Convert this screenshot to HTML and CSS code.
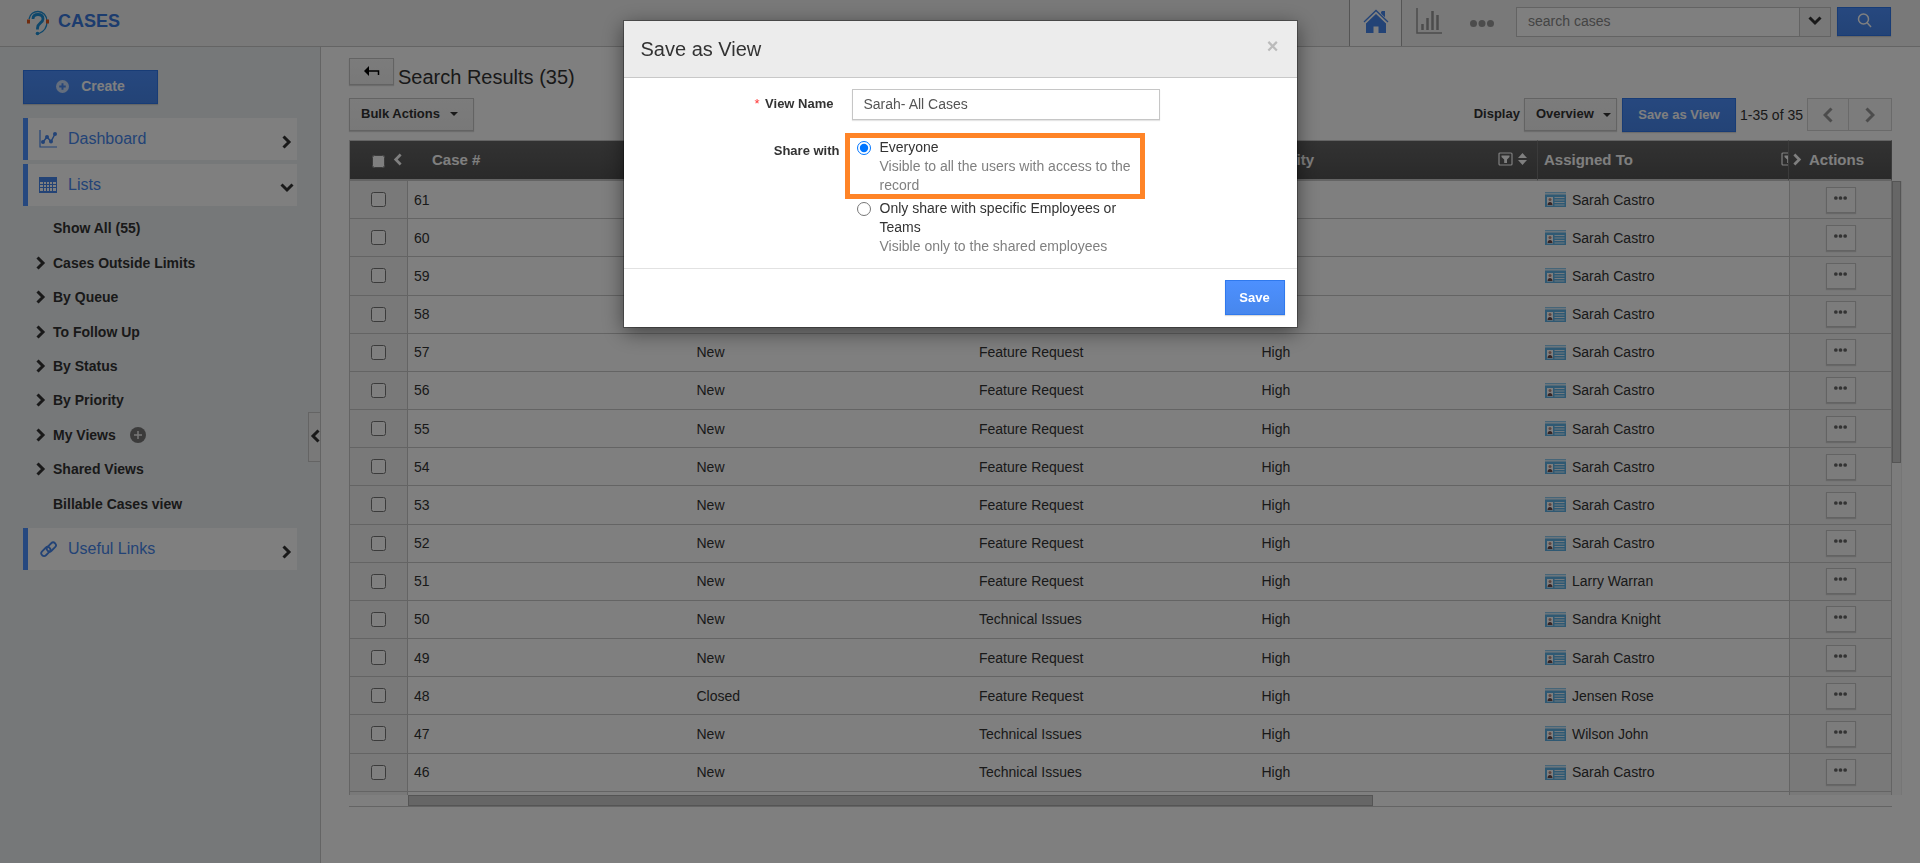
FILE: index.html
```html
<!DOCTYPE html>
<html lang="en">
<head>
  <meta charset="UTF-8" />
  <meta name="viewport" content="width=device-width, initial-scale=1.0"/>
  <title>Cases</title>
  <link rel="stylesheet" href="styles.css">
</head>
<body>

  <!-- shared icons -->
  <svg class="sprite" aria-hidden="true">
    <symbol id="chevron" viewBox="0 0 10 14"><path d="M1.500 1.500L7 7l-5.500 5.500" fill="none" stroke="currentColor" stroke-width="3"/></symbol>
    <symbol id="plus" viewBox="0 0 16 16"><circle cx="8" cy="8" r="8" fill="currentColor"/></symbol>
    <symbol id="filter" viewBox="0 0 15 14">
      <rect x="1" y="1" width="13" height="12" rx="1" fill="none" stroke="currentColor" stroke-width="1.2"/>
      <path d="M3.5 3.5h8v1.5L9 7.500v3.500H6.200V7.500L3.500 5z" fill="currentColor"/>
    </symbol>
    <symbol id="sort" viewBox="0 0 9 12"><path d="M4.500 0L9 5H0zM0 7h9l-4.500 5z" fill="currentColor"/></symbol>
    <symbol id="card" viewBox="0 0 21 15">
      <rect width="21" height="1" fill="#8ccbf0"/>
      <rect y="1" width="21" height="1.500" fill="#d4ebf9"/>
      <rect y="2.500" width="21" height="12.500" fill="#5fb2e6"/>
      <rect x="2" y="5" width="6" height="8.500" fill="#fff"/>
      <circle cx="5" cy="7.500" r="1.500" fill="#b98b80"/>
      <path d="M2.500 13c0-4 5-4 5 0z" fill="#6b4a4a"/>
      <path d="M9.500 5.500h10M9.500 8h10M9.500 10.500h10M9.500 13h10" stroke="#e4f3fc"/>
    </symbol>
    <symbol id="dots" viewBox="0 0 14 4"><path d="M2 0a2 2 0 110 4 2 2 0 010-4zM7 0a2 2 0 110 4 2 2 0 010-4zM12 0a2 2 0 110 4 2 2 0 010-4z" fill="currentColor"/></symbol>
  </svg>

  <header class="topbar">
    <a class="brand" href="#">
      <svg width="22" height="26" viewBox="0 0 22 26" fill="none">
        <path d="M2 9C3 4 7 1.500 11 1.500c5 0 9 4 9 10 0 6-3 10-8 12" stroke="#1d8fd6" stroke-width="1.300"/>
        <path d="M6 9c0-3 2-4.500 5-4.500 3.500 0 5 2 5 4.500 0 4-5.500 4-5.500 9v1.500" stroke="#1d8fd6" stroke-width="2.800"/>
        <circle cx="10.500" cy="23.500" r="1.800" fill="#1d8fd6"/>
        <path d="M1.500 9.500v4M20.500 9.500v4" stroke="#e0571c" stroke-width="3"/>
      </svg>
      CASES
    </a>
    <nav class="tabs">
      <a class="tab active" href="#" aria-label="Home">
        <svg width="26" height="25" viewBox="0 0 26 25">
          <path d="M18 3h4v8l-4-4z" fill="#4787ed"/>
          <path d="M1 13.500L13 2l12 11.500" fill="none" stroke="#fff" stroke-width="4"/>
          <path d="M3 14L13 4.500 23 14v10h-7.500v-6.500h-5V24H3z" fill="#4787ed"/>
          <path d="M1 13L13 1.500 25 13" fill="none" stroke="#4787ed" stroke-width="1.400"/>
          <path d="M2 14.500L13 4l11 10.500" fill="none" stroke="#fff" stroke-width="1.200"/>
          <path d="M18.500 2h3.500v6l-3.500-3z" fill="#4787ed"/>
        </svg>
      </a>
      <a class="tab" href="#" aria-label="Reports">
        <svg width="26" height="26" viewBox="0 0 26 26" stroke="#999" fill="none">
          <path d="M1 0v25h25" stroke-width="1.500"/>
          <path d="M6.500 16v6M11.500 10v12M16.500 3v19M21.500 7v15" stroke-width="2.500"/>
        </svg>
      </a>
      <a class="tab more" href="#" aria-label="More"><svg width="24" height="7" viewBox="0 0 24 7"><path d="M3.500 0a3.500 3.500 0 110 7 3.500 3.500 0 010-7zM12 0a3.500 3.500 0 110 7 3.500 3.500 0 010-7zM20.500 0a3.500 3.500 0 110 7 3.500 3.500 0 010-7z" fill="currentColor"/></svg></a>
    </nav>
    <form class="search">
      <input type="text" aria-label="Search cases" placeholder="search cases">
      <button type="button" class="search-menu" aria-label="Search options"><svg class="down" width="10" height="14"><use href="#chevron"/></svg></button>
      <button type="submit" class="btn-blue search-go" aria-label="Search">
        <svg width="15" height="15" viewBox="0 0 15 15" fill="none" stroke="currentColor" stroke-width="1.500"><circle cx="6.500" cy="6" r="5"/><path d="M10 9.500l4 4.500"/></svg>
      </button>
    </form>
  </header>

  <div class="layout">
    <aside class="sidebar">
      <button type="button" class="btn-blue create">
        <svg width="13" height="13" viewBox="0 0 16 16"><use href="#plus"/><path d="M8 4v8M4 8h8" stroke="#4a8af2" stroke-width="2.400"/></svg>
        Create
      </button>
      <a class="nav-item" href="#">
        <svg width="18" height="18" viewBox="0 0 18 18" fill="none" stroke="#4787ed">
          <path d="M1 0v17h17" stroke-width="1.200"/>
          <path d="M4 12l4-5 4 4.500 4-7.500" stroke-width="1.500"/>
          <g fill="#4787ed" stroke="none"><circle cx="4" cy="12" r="2"/><circle cx="8" cy="7" r="2"/><circle cx="12" cy="11.500" r="2"/><circle cx="16" cy="4" r="2"/></g>
        </svg>
        <span>Dashboard</span>
        <svg class="arrow" width="10" height="14"><use href="#chevron"/></svg>
      </a>
      <a class="nav-item" href="#">
        <svg width="18" height="16" viewBox="0 0 18 16">
          <path d="M0 0h18v16H0z" fill="#4787ed"/>
          <path d="M1 5h3v2H1zM5 5h2v2H5zM8 5h2v2H8zM11 5h2v2h-2zM14 5h3v2h-3zM1 8h3v2H1zM5 8h2v2H5zM8 8h2v2H8zM11 8h2v2h-2zM14 8h3v2h-3zM1 11h3v3H1zM5 11h2v3H5zM8 11h2v3H8zM11 11h2v3h-2zM14 11h3v3h-3z" fill="#fff"/>
        </svg>
        <span>Lists</span>
        <svg class="arrow down" width="10" height="14"><use href="#chevron"/></svg>
      </a>
      <ul class="views">
        <li><a class="plain" href="#">Show All (55)</a></li>
        <li><a href="#"><svg width="10" height="14"><use href="#chevron"/></svg>Cases Outside Limits</a></li>
        <li><a href="#"><svg width="10" height="14"><use href="#chevron"/></svg>By Queue</a></li>
        <li><a href="#"><svg width="10" height="14"><use href="#chevron"/></svg>To Follow Up</a></li>
        <li><a href="#"><svg width="10" height="14"><use href="#chevron"/></svg>By Status</a></li>
        <li><a href="#"><svg width="10" height="14"><use href="#chevron"/></svg>By Priority</a></li>
        <li>
          <a href="#"><svg width="10" height="14"><use href="#chevron"/></svg>My Views</a>
          <button type="button" class="add-view" aria-label="Add view"><svg width="16" height="16" viewBox="0 0 16 16"><use href="#plus"/><path d="M8 4v8M4 8h8" stroke="#eee" stroke-width="1.500"/></svg></button>
        </li>
        <li><a href="#"><svg width="10" height="14"><use href="#chevron"/></svg>Shared Views</a></li>
        <li><a class="plain" href="#">Billable Cases view</a></li>
      </ul>
      <a class="nav-item" href="#">
        <svg width="18" height="18" viewBox="0 0 18 18" fill="none" stroke="#4787ed" stroke-width="1.800">
          <rect x="7" y="4.500" width="10.500" height="5.500" rx="2.700" transform="rotate(-45 12 7)"/>
          <rect x="1.500" y="9" width="10.500" height="5.500" rx="2.700" transform="rotate(-45 6.500 11.500)"/>
        </svg>
        <span>Useful Links</span>
        <svg class="arrow" width="10" height="14"><use href="#chevron"/></svg>
      </a>
      <button type="button" class="collapse" aria-label="Collapse sidebar"><svg class="left" width="10" height="14"><use href="#chevron"/></svg></button>
    </aside>

    <main class="content">
      <div class="title-row">
        <button type="button" class="btn back" aria-label="Back"><svg width="16" height="10" viewBox="0 0 16 10"><path d="M5 0v10L0 5z"/><path d="M4 5h10.500v4" fill="none" stroke="#000" stroke-width="1.500"/></svg></button>
        <h1>Search Results (35)</h1>
      </div>

      <div class="toolbar">
        <button type="button" class="btn bulk">Bulk Actions <i class="caret"></i></button>
        <div class="toolbar-right">
          <label for="display">Display</label>
          <span class="select-wrap">
            <select id="display" class="btn"><option>Overview</option></select>
            <i class="caret"></i>
          </span>
          <button type="button" class="btn-blue save-view">Save as View</button>
          <span class="range">1-35 of 35</span>
          <div class="pager">
            <button type="button" aria-label="Previous"><svg class="left" width="10" height="16" viewBox="0 0 10 16"><path d="M1.500 1.500L8 8l-6.500 6.500" fill="none" stroke="currentColor" stroke-width="3"/></svg></button>
            <button type="button" aria-label="Next"><svg width="10" height="16" viewBox="0 0 10 16"><path d="M1.500 1.500L8 8l-6.500 6.500" fill="none" stroke="currentColor" stroke-width="3"/></svg></button>
          </div>
        </div>
      </div>

      <div class="grid">
        <div class="grid-view">
          <table>
            <thead>
              <tr>
                <th class="col-check"><div class="head"><input type="checkbox" aria-label="Select all"><svg class="left" width="9" height="13"><use href="#chevron"/></svg></div></th>
                <th class="col-case">Case #</th>
                <th>Status</th>
                <th>Category</th>
                <th><div class="head"><span>Priority</span><svg width="15" height="14"><use href="#filter"/></svg><svg width="9" height="12"><use href="#sort"/></svg></div></th>
                <th class="col-assigned"><div class="head"><span>Assigned To</span><svg width="15" height="14"><use href="#filter"/></svg></div></th>
                <th class="col-actions"><div class="head"><svg width="9" height="13"><use href="#chevron"/></svg>Actions</div></th>
              </tr>
            </thead>
            <tbody id="caseRows"></tbody>
          </table>
        </div>
        <div class="scroll-y"><div class="thumb"></div></div>
        <div class="scroll-x"><div class="thumb"></div></div>
      </div>
    </main>
  </div>

  <div class="overlay">
    <div class="modal" role="dialog" aria-labelledby="modalTitle">
      <div class="modal-header">
        <h2 id="modalTitle">Save as View</h2>
        <button type="button" class="close" aria-label="Close">&times;</button>
      </div>
      <form id="viewForm" class="modal-body">
        <label class="field-label" for="viewName"><span class="required">*</span> View Name</label>
        <input type="text" id="viewName" value="Sarah- All Cases">
        <span class="field-label share-label" id="shareLabel">Share with</span>
        <div class="options" role="radiogroup" aria-labelledby="shareLabel">
          <div class="option highlight">
            <input type="radio" name="share" id="everyone" checked>
            <label for="everyone">Everyone<small>Visible to all the users with access to the record</small></label>
          </div>
          <div class="option">
            <input type="radio" name="share" id="specific">
            <label for="specific">Only share with specific Employees or Teams<small>Visible only to the shared employees</small></label>
          </div>
        </div>
      </form>
      <div class="modal-footer">
        <button type="submit" form="viewForm" class="btn-blue save">Save</button>
      </div>
    </div>
  </div>

  <script>
    const cases = [
      [61, "New", "Feature Request", "High", "Sarah Castro"],
      [60, "New", "Feature Request", "High", "Sarah Castro"],
      [59, "New", "Feature Request", "High", "Sarah Castro"],
      [58, "New", "Feature Request", "High", "Sarah Castro"],
      [57, "New", "Feature Request", "High", "Sarah Castro"],
      [56, "New", "Feature Request", "High", "Sarah Castro"],
      [55, "New", "Feature Request", "High", "Sarah Castro"],
      [54, "New", "Feature Request", "High", "Sarah Castro"],
      [53, "New", "Feature Request", "High", "Sarah Castro"],
      [52, "New", "Feature Request", "High", "Sarah Castro"],
      [51, "New", "Feature Request", "High", "Larry Warran"],
      [50, "New", "Technical Issues", "High", "Sandra Knight"],
      [49, "New", "Feature Request", "High", "Sarah Castro"],
      [48, "Closed", "Feature Request", "High", "Jensen Rose"],
      [47, "New", "Technical Issues", "High", "Wilson John"],
      [46, "New", "Technical Issues", "High", "Sarah Castro"]
    ];

    const rows = document.getElementById("caseRows");

    cases.forEach(([id, status, category, priority, owner]) => {
      const tr = document.createElement("tr");
      tr.innerHTML = `
        <td class="col-check"><input type="checkbox" aria-label="Select case ${id}"></td>
        <td>${id}</td>
        <td>${status}</td>
        <td>${category}</td>
        <td>${priority}</td>
        <td><span class="owner"><svg width="21" height="15"><use href="#card"/></svg>${owner}</span></td>
        <td class="col-actions"><button type="button" class="row-menu" aria-label="Actions for case ${id}"><svg width="13" height="4"><use href="#dots"/></svg></button></td>
      `;
      rows.appendChild(tr);
    });

    // start of the next row, cut off by the scroll area
    const next = document.createElement("tr");
    next.innerHTML = '<td class="col-check"></td><td></td><td></td><td></td><td></td><td></td><td class="col-actions"></td>';
    rows.appendChild(next);
  </script>

</body>
</html>
```

FILE: styles.css
```css
* {
  box-sizing: border-box;
  font-family: "Liberation Sans", Arial, sans-serif;
}

body {
  margin: 0;
  min-height: 100vh;
  display: flex;
  flex-direction: column;
  background: #fff;
  color: #333;
  font-size: 14px;
  overflow: hidden;
}

button {
  cursor: pointer;
  padding: 0;
}

a {
  text-decoration: none;
}

.sprite {
  display: none;
}

.left {
  transform: scaleX(-1);
}

.down {
  transform: rotate(90deg);
}

.caret {
  display: inline-block;
  border: 4px solid transparent;
  border-top-color: #333;
  border-bottom: 0;
}

.btn {
  background: linear-gradient(#f8f8f8, #f1f1f1);
  border: 1px solid #c6c6c6;
  box-shadow: 0 1px 1px rgba(0, 0, 0, 0.15);
  color: #333;
  font-size: 13px;
  font-weight: bold;
}

.btn-blue {
  background: linear-gradient(#4d90fe, #4787ed);
  border: 1px solid #3079ed;
  box-shadow: 0 1px 1px rgba(0, 0, 0, 0.15);
  color: #fff;
  font-size: 13px;
  font-weight: bold;
}

/* top bar */

.topbar {
  height: 47px;
  display: flex;
  align-items: flex-start;
  background: #f2f2f2;
  border-bottom: 1px solid #c8c8c8;
  padding: 0 29px 0 27px;
}

.brand {
  display: flex;
  align-items: center;
  gap: 9px;
  height: 42px;
  margin-right: auto;
  color: #3878dc;
  font-size: 18px;
  font-weight: bold;
}

.brand svg {
  margin-top: 4px;
}

.tabs {
  display: flex;
  height: 46px;
}

.tab {
  display: flex;
  align-items: center;
  justify-content: center;
  width: 53px;
  padding-bottom: 4px;
  color: #999;
}

.tab.active {
  background: #fff;
  border: solid #aaa;
  border-width: 0 1px;
}

.tab.more {
  padding-bottom: 0;
}

.search {
  display: flex;
  margin: 7px 0 0 8px;
}

.search input {
  width: 284px;
  height: 30px;
  padding: 0 11px 2px;
  border: 1px solid #c6c6c6;
  background: #fff;
  font-size: 14px;
}

.search input::placeholder {
  color: #888;
}

.search-menu {
  width: 31px;
  height: 30px;
  border: 1px solid #c6c6c6;
  border-left: 0;
  background: #f0f0f0;
  color: #333;
}

.search-go {
  width: 54px;
  height: 29px;
  margin-left: 6px;
}

/* sidebar */

.layout {
  flex: 1;
  display: flex;
}

.sidebar {
  position: relative;
  width: 321px;
  flex-shrink: 0;
  padding: 23px 23px 0;
  background: #edf0f3;
  border-right: 1px solid #c8c8c8;
}

.create {
  display: flex;
  align-items: center;
  justify-content: center;
  gap: 12px;
  width: 135px;
  height: 34px;
  margin-bottom: 14px;
  padding-bottom: 2px;
  font-size: 14px;
}

.create svg {
  color: #c8dcfb;
}

.nav-item {
  display: flex;
  align-items: center;
  gap: 11px;
  height: 42px;
  margin-bottom: 4px;
  padding: 0 5px 0 11px;
  border-left: 5px solid #4d90fe;
  background: #fff;
  color: #4787ed;
  font-size: 16px;
}

.nav-item .arrow {
  margin: 6px 0 0 auto;
  color: #333;
}

.views {
  display: grid;
  grid-auto-rows: 1fr;
  height: 310px;
  list-style: none;
  margin: 5px 0 7px;
  padding: 0 0 0 13px;
}

.views li,
.views a {
  display: flex;
  align-items: center;
  gap: 7px;
}

.views li {
  gap: 14px;
}

.views a {
  color: #333;
  font-size: 14px;
  font-weight: bold;
}

.views .plain {
  padding-left: 17px;
}

.add-view {
  display: flex;
  border: 0;
  background: none;
  color: #777;
}

.collapse {
  position: absolute;
  right: 0;
  top: 365px;
  width: 12px;
  height: 50px;
  border: 1px solid #c8c8c8;
  border-right: 0;
  background: #f2f2f2;
  color: #333;
}

/* content */

.content {
  flex: 1;
  min-width: 0;
  padding: 11px 18px 0 28px;
}

.title-row {
  display: flex;
  gap: 4px;
  height: 40px;
}

.back {
  width: 45px;
  height: 27px;
}

h1,
h2 {
  margin: 0;
  font-size: 20px;
  font-weight: normal;
}

h1 {
  line-height: 38px;
}

.toolbar {
  display: flex;
  justify-content: space-between;
  height: 42px;
  padding-right: 10px;
}

.bulk {
  width: 125px;
  height: 33px;
  padding: 0 0 3px 11px;
  text-align: left;
}

.bulk .caret {
  margin: 0 0 2px 6px;
}

.toolbar-right {
  display: flex;
  align-items: flex-start;
  line-height: 31px;
}

.toolbar-right label {
  font-weight: bold;
  font-size: 13px;
  margin-right: 4px;
}

.select-wrap {
  position: relative;
  margin-right: 5px;
}

.select-wrap select {
  appearance: none;
  display: block;
  width: 93px;
  height: 33px;
  padding: 0 11px 3px;
  border-radius: 0;
}

.select-wrap .caret {
  position: absolute;
  right: 6px;
  top: 15px;
  pointer-events: none;
}

.save-view {
  width: 114px;
  height: 34px;
  padding-bottom: 2px;
}

.range {
  margin: 2px 4px 0;
}

.pager {
  display: flex;
}

.pager button {
  width: 42px;
  height: 33px;
  border: 1px solid #d4d4d4;
  background: #f8f8f8;
  color: #999;
  line-height: 0;
}

.pager button + button {
  width: 43px;
  border-left: 0;
}

/* cases grid */

.grid {
  display: grid;
  grid-template-columns: 1fr 10px;
}

.grid-view {
  height: calc(100vh - 208px);
  overflow: hidden;
}

table {
  width: 100%;
  height: 690px;
  table-layout: fixed;
  border-collapse: separate;
  border-spacing: 0;
  border-left: 1px solid #c8c8c8;
}

th {
  height: 41px;
  padding: 0 6px 2px;
  background: linear-gradient(#656565, #545454);
  border-top: 1px solid #c8c8c8;
  border-bottom: 2px solid #c8c8c8;
  border-right: 1px solid #777;
  color: #fff;
  font-size: 15px;
  text-align: left;
}

td {
  height: 38px;
  padding: 0 6px;
  border-bottom: 1px solid #c8c8c8;
}

th.col-check {
  width: 58px;
  border-right: 0;
}

th.col-case {
  padding-left: 24px;
}

th.col-assigned {
  width: 251px;
  padding-right: 0;
  overflow: hidden;
}

th.col-actions {
  width: 103px;
  padding-left: 4px;
}

.head {
  display: flex;
  align-items: center;
  gap: 5px;
  padding-right: 4px;
}

.head span {
  margin-right: auto;
}

.head svg {
  flex-shrink: 0;
}

.col-actions .head {
  gap: 7px;
}

.col-assigned .head {
  padding: 0;
  margin-right: -8px;
}

.col-check .head {
  gap: 8px;
  padding-left: 16px;
}

.col-check input {
  display: block;
  width: 15px;
  height: 15px;
  margin: 0 auto;
}

.col-check .head input {
  width: 13px;
  height: 13px;
  margin: 4px 0 0;
}

td.col-check,
td.col-actions {
  background: #f2f2f2;
  border-right: 1px solid #c8c8c8;
}

td.col-actions {
  border-left: 1px solid #c8c8c8;
  text-align: center;
}

.owner {
  display: flex;
  align-items: center;
  gap: 6px;
  padding-left: 1px;
}

.row-menu {
  display: block;
  width: 30px;
  height: 26px;
  margin: 0 auto;
  padding-bottom: 4px;
  border: 1px solid #c6c6c6;
  background: #f8f8f8;
  box-shadow: 0 1px 1px rgba(0, 0, 0, 0.15);
  color: #666;
  line-height: 0;
}

.scroll-y {
  margin-top: 41px;
  background: #f8f8f8;
  border-right: 1px solid #ececec;
}

.scroll-y .thumb {
  height: 46%;
  background: #ccc;
  border: 1px solid #aaa;
}

.scroll-x {
  height: 12px;
  padding-left: 59px;
  border-bottom: 1px solid #c8c8c8;
}

.scroll-x .thumb {
  width: 65%;
  height: 11px;
  background: #ccc;
  border: 1px solid #aaa;
}

/* save view dialog */

.overlay {
  position: fixed;
  inset: 0;
  display: flex;
  justify-content: center;
  align-items: flex-start;
  padding-top: 21px;
  background: rgba(0, 0, 0, 0.5);
}

.modal {
  width: 673px;
  background: #fff;
  box-shadow: 0 0 0 1px rgba(0, 0, 0, 0.3), 0 5px 20px rgba(0, 0, 0, 0.5);
}

.modal-header {
  display: flex;
  justify-content: space-between;
  height: 57px;
  padding: 0 18px 0 17px;
  background: #ececec;
  border-bottom: 1px solid #c8c8c8;
}

.modal-header h2 {
  line-height: 56px;
}

.close {
  height: 50px;
  border: 0;
  background: none;
  color: #bbb;
  font-size: 20px;
  font-weight: bold;
}

.modal-body {
  display: grid;
  grid-template-columns: 210px 1fr;
  gap: 13px 18px;
  padding: 11px 0 12px;
}

.modal-body input[type="text"] {
  width: 308px;
  height: 31px;
  padding: 0 11px 2px;
  border: 1px solid #c6c6c6;
  box-shadow: 0 1px 1px rgba(0, 0, 0, 0.1);
  color: #555;
  font-size: 14px;
}

.field-label {
  font-size: 13px;
  font-weight: bold;
  line-height: 30px;
  text-align: right;
}

.share-label {
  margin-right: -6px;
  line-height: 36px;
}

.required {
  margin-right: 2px;
  color: #f33;
  font-weight: normal;
}

.options {
  width: 300px;
  margin-left: -7px;
}

.option {
  display: flex;
  align-items: flex-start;
  gap: 9px;
  padding: 0 12px;
}

.option.highlight {
  height: 66px;
  padding: 0 7px;
  border: 5px solid #ff8427;
}

.option input {
  flex-shrink: 0;
  width: 14px;
  height: 14px;
  margin: 3px 0 0;
}

.option label,
.option small {
  font-size: 14px;
  line-height: 19px;
}

.option small {
  display: block;
  color: #808080;
}

.modal-footer {
  display: flex;
  justify-content: flex-end;
  padding: 11px 12px 12px;
  border-top: 1px solid #e2e2e2;
}

.save {
  width: 60px;
  height: 35px;
}
```
